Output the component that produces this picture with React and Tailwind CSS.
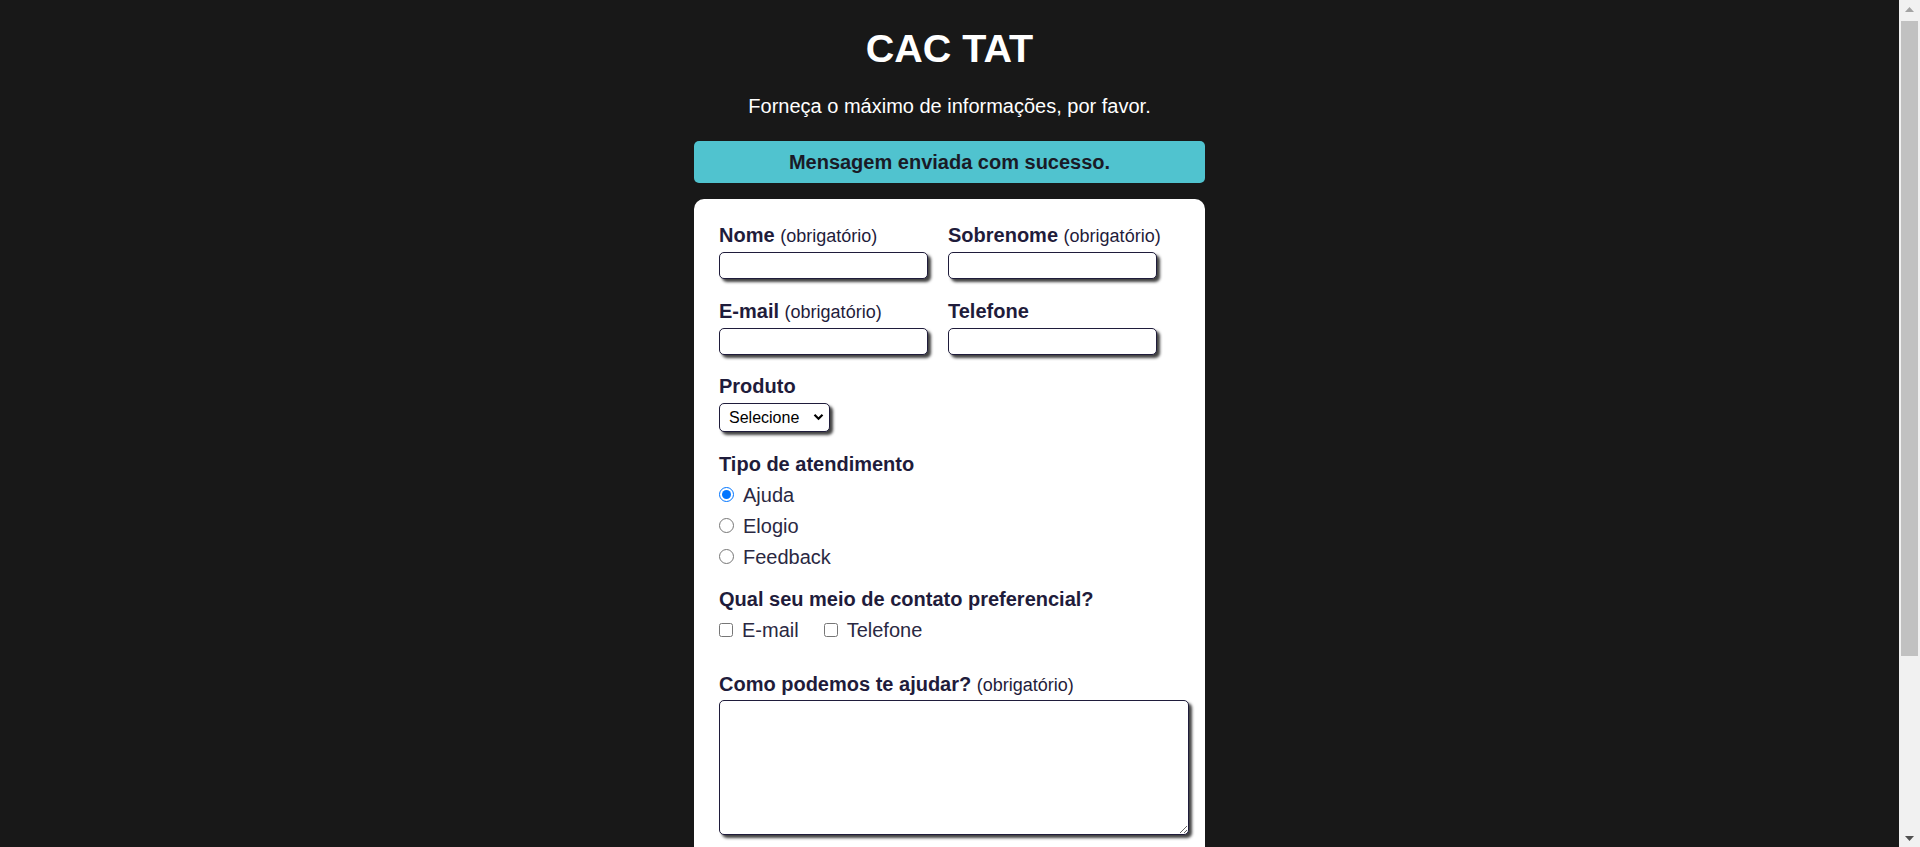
import React, { useState } from 'react';

const labelCls = 'block whitespace-nowrap text-[20px] leading-[24px] text-[#1f1c3b]';
const inputCls =
  'mt-[5px] block h-[27px] w-[209px] rounded-[5px] border border-[#1f1c3b] bg-white px-1 text-[16px] shadow-[3px_3px_3px_rgba(0,0,0,0.75)] outline-none';

const Required = () => <span className="text-[18px] font-normal leading-none">(obrigatório)</span>;

// window scrollbar as it appears on the captured page
const ScrollTrack = () => (
  <div className="flex h-screen w-[21px] shrink-0 flex-col bg-[#f1f1f1]">
    <div className="flex h-[21px] items-center justify-center pb-[3px]">
      <svg width="9" height="5" viewBox="0 0 9 5">
        <path d="M0 5 4.5 0 9 5Z" fill="#a3a3a3" />
      </svg>
    </div>
    <div className="mx-[2px] h-[635px] bg-[#c1c1c1]" />
    <div className="flex-1" />
    <div className="flex h-[21px] items-center justify-center pt-[3px]">
      <svg width="9" height="5" viewBox="0 0 9 5">
        <path d="M0 0 4.5 5 9 0Z" fill="#505050" />
      </svg>
    </div>
  </div>
);

const App = () => {
  const [tipo, setTipo] = useState('ajuda');
  const [contato, setContato] = useState({ email: false, telefone: false });

  return (
    <div className="flex h-screen bg-[#181818] font-['Liberation_Sans',Arial,Helvetica,sans-serif]">
      <main className="h-screen flex-1 overflow-y-auto">
        <div className="mx-auto w-[511px] pt-[26px] pb-[44px]">
          <h1 className="text-center text-[39.5px] font-bold leading-[44px] text-white">CAC TAT</h1>
          <p className="mt-[24px] text-center text-[20px] leading-[24px] text-white">
            Forneça o máximo de informações, por favor.
          </p>

          <div className="mt-[23px] rounded-[5px] bg-[#50c3cf] py-[9px] text-center text-[20px] font-bold leading-[24px] text-[#1a1a26]">
            Mensagem enviada com sucesso.
          </div>

          <form className="mt-[16px] rounded-[10px] bg-white pt-[24px] pr-[16px] pb-[24px] pl-[25px]" onSubmit={(e) => e.preventDefault()}>
            <div className="grid grid-cols-[209px_209px] gap-x-[20px]">
              <div>
                <label className={labelCls}>
                  <strong className="font-bold">Nome</strong> <Required />
                </label>
                <input type="text" className={inputCls} />
              </div>
              <div>
                <label className={labelCls}>
                  <strong className="font-bold">Sobrenome</strong> <Required />
                </label>
                <input type="text" className={inputCls} />
              </div>
              <div className="mt-[20px]">
                <label className={labelCls}>
                  <strong className="font-bold">E-mail</strong> <Required />
                </label>
                <input type="email" className={inputCls} />
              </div>
              <div className="mt-[20px]">
                <label className={labelCls}>
                  <strong className="font-bold">Telefone</strong>
                </label>
                <input type="number" className={inputCls} />
              </div>
            </div>

            <div className="mt-[19px]">
              <label className={labelCls}>
                <strong className="font-bold">Produto</strong>
              </label>
              <div className="relative mt-[5px] w-[111px]">
                <select className="block h-[29px] w-[111px] appearance-none rounded-[5px] border border-[#1f1c3b] bg-white pl-[9px] text-[16px] text-black shadow-[3px_3px_3px_rgba(0,0,0,0.75)] outline-none">
                  <option>Selecione</option>
                  <option>Blog</option>
                  <option>Cursos</option>
                  <option>Mentoria</option>
                  <option>YouTube</option>
                </select>
                <svg className="pointer-events-none absolute right-[6px] top-[10px]" width="11" height="8" viewBox="0 0 11 8" fill="none">
                  <path d="M1.5 1.8 5.5 5.8 9.5 1.8" stroke="#000" strokeWidth="2.2" />
                </svg>
              </div>
            </div>

            <div className="mt-[20px]">
              <span className={`${labelCls} font-bold`}>Tipo de atendimento</span>
              <div className="mt-[3px]">
                {[
                  ['ajuda', 'Ajuda'],
                  ['elogio', 'Elogio'],
                  ['feedback', 'Feedback'],
                ].map(([value, text]) => (
                  <label key={value} className="flex h-[31px] items-center gap-[9px] text-[20px] leading-[24px] text-[#2a2842]">
                    <input
                      type="radio"
                      name="atendimento-tat"
                      value={value}
                      checked={tipo === value}
                      onChange={() => setTipo(value)}
                      className="m-0 h-[15px] w-[15px] accent-[#0075ff]"
                    />
                    {text}
                  </label>
                ))}
              </div>
            </div>

            <div className="mt-[15px]">
              <span className={`${labelCls} font-bold`}>Qual seu meio de contato preferencial?</span>
              <div className="mt-[7px] flex h-[24px] items-center gap-[25px] text-[20px] leading-[24px] text-[#2a2842]">
                <label className="flex items-center gap-[9px]">
                  <input
                    type="checkbox"
                    checked={contato.email}
                    onChange={(e) => setContato({ ...contato, email: e.target.checked })}
                    className="m-0 h-[14px] w-[14px]"
                  />
                  E-mail
                </label>
                <label className="flex items-center gap-[9px]">
                  <input
                    type="checkbox"
                    checked={contato.telefone}
                    onChange={(e) => setContato({ ...contato, telefone: e.target.checked })}
                    className="m-0 h-[14px] w-[14px]"
                  />
                  Telefone
                </label>
              </div>
            </div>

            <div className="mt-[30px]">
              <label className={labelCls}>
                <strong className="font-bold">Como podemos te ajudar?</strong> <Required />
              </label>
              <textarea
                rows={5}
                className="mt-[4px] block h-[135px] w-[470px] rounded-[5px] border border-[#1f1c3b] bg-white p-1 text-[16px] shadow-[3px_3px_3px_rgba(0,0,0,0.75)] outline-none"
              />
            </div>

            <div className="mt-[20px]">
              <label className={labelCls}>
                <strong className="font-bold">Selecione um arquivo</strong>
              </label>
              <input type="file" className="mt-[5px] block text-[16px] text-[#1f1c3b]" />
            </div>

            <button
              type="submit"
              className="mt-[20px] h-[40px] w-[120px] rounded-[5px] bg-[#50c3cf] text-[20px] font-bold text-[#1a1a26] shadow-[3px_3px_3px_rgba(0,0,0,0.75)]"
            >
              Enviar
            </button>
          </form>

          <p className="mt-[16px] text-center text-[20px] leading-[24px]">
            <a href="#privacy" className="text-[#50c3cf] underline">Política de Privacidade</a>
          </p>
          <p className="mt-[8px] text-center text-[16px] leading-[20px] text-white">Talking About Testing</p>
        </div>
      </main>
      <ScrollTrack />
    </div>
  );
};

export default App;
